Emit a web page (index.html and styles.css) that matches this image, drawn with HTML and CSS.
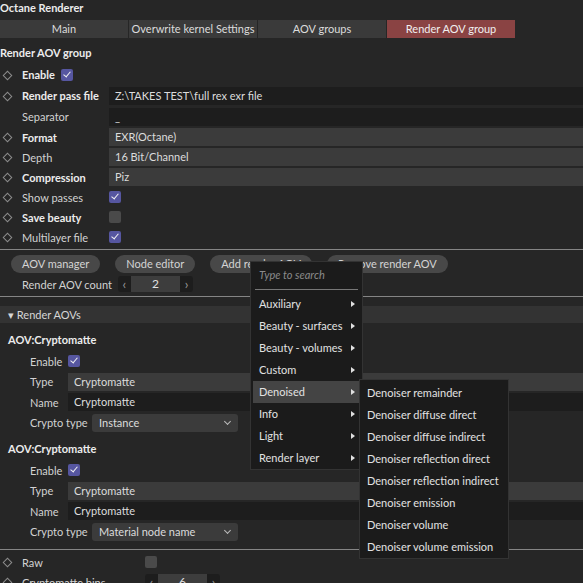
FILE: index.html
```html
<!DOCTYPE html>
<html>
    <head>
        <meta charset="UTF-8">
        <title>Octane Renderer</title>
        <link rel="stylesheet" href="styles.css">
    </head>
    <body>
        <div class="title">Octane Renderer</div>

        <div class="tabs">
            <div class="tab">Main</div>
            <div class="tab">Overwrite kernel Settings</div>
            <div class="tab">AOV groups</div>
            <div class="tab active">Render AOV group</div>
        </div>

        <div class="group-title">Render AOV group</div>

        <div class="row tall">
            <span class="dia"></span><span class="bold">Enable</span><span class="check on inline"></span>
        </div>
        <div class="row tall">
            <span class="dia"></span><span class="lbl bold">Render pass file</span><span class="field dark">Z:\TAKES TEST\full rex exr file</span>
        </div>
        <div class="row tall">
            <span class="dia none"></span><span class="lbl">Separator</span><span class="field dark">_</span>
        </div>
        <div class="row">
            <span class="dia"></span><span class="lbl bold">Format</span><span class="field">EXR(Octane)</span>
        </div>
        <div class="row">
            <span class="dia"></span><span class="lbl">Depth</span><span class="field">16 Bit/Channel</span>
        </div>
        <div class="row">
            <span class="dia"></span><span class="lbl bold">Compression</span><span class="field">Piz</span>
        </div>
        <div class="row">
            <span class="dia"></span><span class="lbl">Show passes</span><span class="check on"></span>
        </div>
        <div class="row">
            <span class="dia"></span><span class="lbl bold">Save beauty</span><span class="check"></span>
        </div>
        <div class="row">
            <span class="dia"></span><span class="lbl">Multilayer file</span><span class="check on"></span>
        </div>

        <div class="line"></div>

        <div class="buttons">
            <span class="pill">AOV manager</span>
            <span class="pill">Node editor</span>
            <span class="pill">Add render AOV</span>
            <span class="pill">Remove render AOV</span>
        </div>
        <div class="row count-row">
            <span class="count-lbl">Render AOV count</span>
            <span class="num"><span class="arr">&lsaquo;</span><span class="num-val">2</span><span class="arr">&rsaquo;</span></span>
        </div>

        <div class="line"></div>

        <div class="section">&#9662; Render AOVs</div>

        <div class="aov">
            <div class="aov-title">AOV:Cryptomatte</div>
            <div class="sub-row"><span class="sub-lbl">Enable</span><span class="check on"></span></div>
            <div class="sub-row"><span class="sub-lbl">Type</span><span class="field">Cryptomatte</span></div>
            <div class="sub-row"><span class="sub-lbl">Name</span><span class="field dark">Cryptomatte</span></div>
            <div class="sub-row"><span class="crypto-lbl">Crypto type</span><span class="drop">Instance<span class="chev"></span></span></div>

            <div class="aov-title">AOV:Cryptomatte</div>
            <div class="sub-row"><span class="sub-lbl">Enable</span><span class="check on"></span></div>
            <div class="sub-row"><span class="sub-lbl">Type</span><span class="field">Cryptomatte</span></div>
            <div class="sub-row"><span class="sub-lbl">Name</span><span class="field dark">Cryptomatte</span></div>
            <div class="sub-row"><span class="crypto-lbl">Crypto type</span><span class="drop">Material node name<span class="chev"></span></span></div>
        </div>

        <div class="line"></div>

        <div class="row">
            <span class="dia"></span><span class="lbl wide">Raw</span><span class="check"></span>
        </div>
        <div class="row">
            <span class="dia"></span><span class="lbl wide">Cryptomatte bins</span>
            <span class="num"><span class="arr">&lsaquo;</span><span class="num-val">6</span><span class="arr">&rsaquo;</span></span>
        </div>

        <!-- popup menus -->
        <div class="menu">
            <div class="search">Type to search</div>
            <div class="item">Auxiliary<span class="tri"></span></div>
            <div class="item">Beauty - surfaces<span class="tri"></span></div>
            <div class="item">Beauty - volumes<span class="tri"></span></div>
            <div class="item">Custom<span class="tri"></span></div>
            <div class="item hi">Denoised<span class="tri"></span></div>
            <div class="item">Info<span class="tri"></span></div>
            <div class="item">Light<span class="tri"></span></div>
            <div class="item">Render layer<span class="tri"></span></div>
        </div>

        <div class="submenu">
            <div class="item">Denoiser remainder</div>
            <div class="item">Denoiser diffuse direct</div>
            <div class="item">Denoiser diffuse indirect</div>
            <div class="item">Denoiser reflection direct</div>
            <div class="item">Denoiser reflection indirect</div>
            <div class="item">Denoiser emission</div>
            <div class="item">Denoiser volume</div>
            <div class="item">Denoiser volume emission</div>
        </div>
    </body>
</html>
```

FILE: styles.css
```css
/* base */
body {
    margin: 0;
    background-color: #262626;
    color: #d2d2d2;
    font-family: Lato, "Open Sans", sans-serif;
    font-size: 11px;
    white-space: nowrap;
    overflow: hidden;
    height: 583px;
}

.bold {
    font-weight: bold;
    color: #ececec;
}

.title {
    height: 17px;
    line-height: 16px;
    font-weight: bold;
    color: #ececec;
}

/* tabs */
.tabs {
    display: flex;
    margin-top: 3px;
    height: 18px;
}

.tab {
    width: 128px;
    margin-right: 1px;
    background-color: #3a3a3a;
    text-align: center;
    line-height: 18px;
    color: #dcdcdc;
}

.tab.active {
    background-color: #8a4343;
    color: #f0f0f0;
}

.group-title {
    height: 18px;
    line-height: 18px;
    padding-top: 6px;
    margin-bottom: 2px;
    font-weight: bold;
    color: #ececec;
}

/* property rows */
.row {
    display: flex;
    align-items: center;
    height: 20px;
}

.row.tall {
    height: 21px;
}

.dia {
    width: 22px;
    height: 20px;
    position: relative;
    flex: none;
}

.dia::before {
    content: "";
    position: absolute;
    left: 4px;
    top: 7px;
    width: 5px;
    height: 5px;
    border: 1px solid #8c8c8c;
    transform: rotate(45deg);
}

.dia.none::before {
    display: none;
}

.lbl {
    width: 87px;
    flex: none;
}

.lbl.wide {
    width: 123px;
}

.field {
    flex: 1;
    height: 18px;
    line-height: 18px;
    padding-left: 6px;
    background-color: #3b3b3b;
    color: #dcdcdc;
}

.field.dark {
    background-color: #1d1d1d;
}

.check {
    width: 12px;
    height: 12px;
    border-radius: 2px;
    background-color: #4a4a4a;
    flex: none;
    position: relative;
}

.check.on {
    background-color: #5656a0;
}

.check.on::after {
    content: "";
    position: absolute;
    left: 4px;
    top: 1px;
    width: 3px;
    height: 6px;
    border-right: 1.6px solid #f2f2f2;
    border-bottom: 1.6px solid #f2f2f2;
    transform: rotate(40deg);
}

.check.inline {
    margin-left: 6px;
}

.line {
    height: 1px;
    background-color: #858585;
    margin: 2px 0;
}

/* buttons */
.buttons {
    display: flex;
    gap: 15px;
    padding: 3px 0 1px 11px;
}

.pill {
    height: 18px;
    line-height: 18px;
    padding: 0 11px;
    border-radius: 9px;
    background-color: #484848;
    color: #d4d4d4;
}

.count-row {
    padding-left: 22px;
    height: 20px;
}

.count-lbl {
    width: 96px;
}

.num {
    display: flex;
    align-items: center;
    width: 75px;
    height: 16px;
    background-color: #1d1d1d;
    border-radius: 3px;
    color: #9a9a9a;
}

.arr {
    width: 13px;
    text-align: center;
    font-size: 13px;
    line-height: 14px;
}

.num-val {
    width: 50px;
    height: 16px;
    line-height: 16px;
    text-align: center;
    background-color: #3d3d3d;
    color: #e0e0e0;
    font-size: 12px;
}

/* render aovs */
.section {
    margin-top: 9px;
    height: 17px;
    line-height: 17px;
    padding-left: 8px;
    background-color: #333333;
    color: #d6d6d6;
}

.aov {
    padding: 6px 0 5px 0;
}

.aov-title {
    height: 22px;
    line-height: 22px;
    padding-left: 8px;
    font-weight: bold;
    color: #ececec;
}

.aov-title ~ .aov-title {
    margin-top: 5px;
}

.sub-row {
    display: flex;
    align-items: center;
    height: 20.5px;
    padding-left: 30px;
}

.sub-lbl {
    width: 38px;
    flex: none;
}

.crypto-lbl {
    width: 62px;
    flex: none;
}

.drop {
    position: relative;
    width: 139px;
    height: 18px;
    line-height: 18px;
    padding-left: 7px;
    border-radius: 3px;
    background-color: #3b3b3b;
    color: #dcdcdc;
}

.chev {
    position: absolute;
    right: 8px;
    top: 5px;
    width: 4px;
    height: 4px;
    border-right: 1px solid #bbbbbb;
    border-bottom: 1px solid #bbbbbb;
    transform: rotate(45deg);
}

/* popup menus */
.menu {
    position: absolute;
    left: 250px;
    top: 261px;
    width: 113px;
    height: 209px;
    background-color: #1b1b1b;
    border: 1px solid #333333;
    padding: 0 2px;
    box-sizing: border-box;
}

.search {
    height: 27px;
    line-height: 26px;
    margin: 0 2px 3px 2px;
    padding-left: 4px;
    border-bottom: 1px solid #777777;
    font-style: italic;
    color: #8a8a8a;
}

.item {
    position: relative;
    height: 22px;
    line-height: 22px;
    padding-left: 6px;
    color: #e2e2e2;
}

.item.hi {
    background-color: #444444;
}

.tri {
    position: absolute;
    right: 5px;
    top: 8px;
    border-left: 4px solid #e0e0e0;
    border-top: 3.5px solid transparent;
    border-bottom: 3.5px solid transparent;
}

.submenu {
    position: absolute;
    left: 359px;
    top: 379px;
    width: 150px;
    height: 180px;
    background-color: #1b1b1b;
    border: 1px solid #333333;
    padding-top: 2px;
    box-sizing: border-box;
}

.submenu .item {
    padding-left: 7px;
}
```
